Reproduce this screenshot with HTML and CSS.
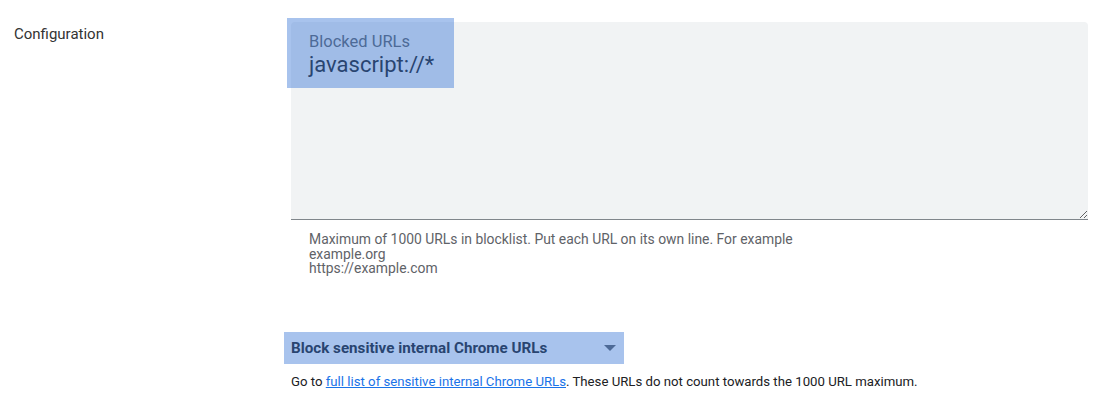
FILE: index.html
```html
<!DOCTYPE html>
<html>
<head>
<meta charset="utf-8">
<link rel="stylesheet" href="styles.css">
</head>
<body>
<div class="row">
  <div class="label">Configuration</div>
  <div class="content">
    <div class="tf">
      <div class="tf-label">Blocked URLs</div>
      <textarea class="tf-input">javascript://*</textarea>
      <div class="hl hl-tf"></div>
    </div>
    <div class="helper">
      <div>Maximum of 1000 URLs in blocklist. Put each URL on its own line. For example</div>
      <div>example.org</div>
      <div>https://example.com</div>
    </div>
    <div class="select">
      <span class="select-text">Block sensitive internal Chrome URLs</span>
      <svg class="caret" width="12" height="6" viewBox="0 0 12 6"><path d="M0 0h12L6 6z" fill="#5f6368"/></svg>
      <div class="hl hl-sel"></div>
    </div>
    <div class="note">Go to <a href="#">full list of sensitive internal Chrome URLs</a>. These URLs do not count towards the 1000 URL maximum.</div>
  </div>
</div>
</body>
</html>
```

FILE: styles.css
```css
html, body {
  margin: 0;
  padding: 0;
  background: #fff;
  font-family: Roboto, "Liberation Sans", Arial, sans-serif;
  color: #202124;
}
.row {
  display: flex;
  padding-left: 14px;
}
.label {
  width: 277px;
  flex: none;
  font-size: 15px;
  line-height: 20px;
  padding-top: 23.5px;
  color: #333;
}
.content {
  width: 797px;
  padding-top: 22px;
}
.tf {
  position: relative;
  height: 197px;
  background: #f1f3f4;
  border-radius: 4px 4px 0 0;
  border-bottom: 1px solid #80868b;
  display: flex;
  flex-direction: column;
}
.tf-label {
  font-size: 16.5px;
  line-height: 20px;
  padding: 10px 18px 0;
  color: #5f6368;
}
.tf-input {
  flex: 1;
  border: none;
  outline: none;
  background: transparent;
  font-family: Roboto, "Liberation Sans", Arial, sans-serif;
  font-size: 22px;
  line-height: 24px;
  color: #202124;
  padding: 0.5px 18px 0;
  margin: 0;
  resize: vertical;
}
.hl {
  position: absolute;
  background: rgba(53, 116, 214, 0.43);
  pointer-events: none;
}
.hl-tf {
  left: -4px;
  top: -4px;
  width: 167px;
  height: 70px;
}
.helper {
  margin-top: 12px;
  padding-left: 18px;
  font-size: 13.9px;
  line-height: 14.6px;
  color: #5f6368;
}
.select {
  position: relative;
  margin-top: 56px;
  height: 32px;
  width: 340px;
  margin-left: -7px;
  display: flex;
  align-items: center;
  padding-left: 7px;
  box-sizing: border-box;
}
.select-text {
  font-size: 15.2px;
  font-weight: 700;
  color: #202124;
  flex: 1;
}
.caret {
  margin-right: 8px;
}
.hl-sel {
  inset: 0;
}
.note {
  margin-top: 10px;
  font-size: 13.2px;
  line-height: 16px;
  color: #202124;
}
.note a {
  color: #1a73e8;
  text-decoration: underline;
}
```
